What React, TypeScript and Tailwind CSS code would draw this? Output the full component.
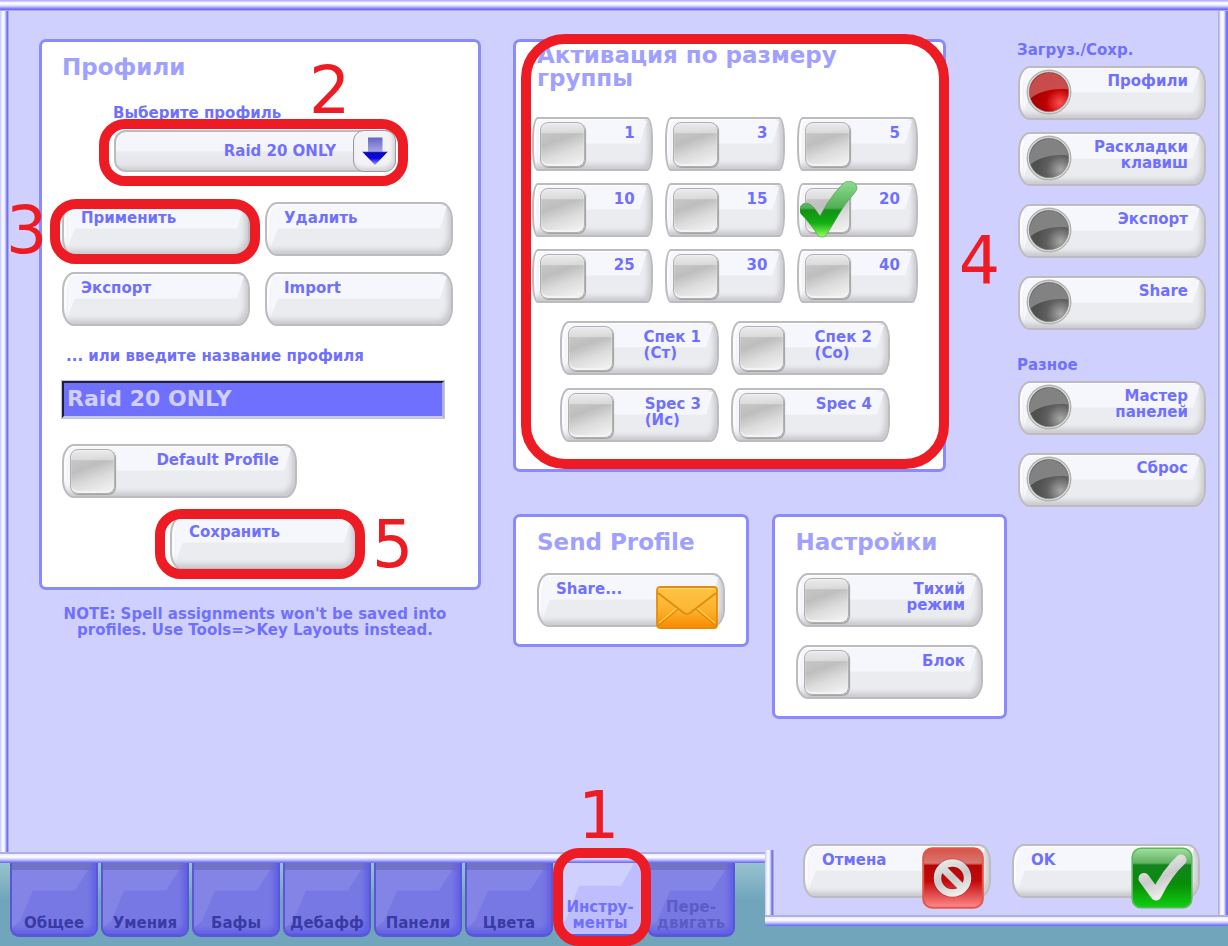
import { useState, type ReactNode } from "react";
import { clsx } from "clsx";

const FONT = "font-['DejaVu_Sans','Liberation_Sans',sans-serif]";

const SURFACE =
  "relative isolate overflow-hidden border-2 border-[#bcbcc0] bg-[#ebecf0] shadow-[inset_-3px_-4px_5px_#c9c9ce,inset_3px_2px_3px_#ffffff]";

const TEXT = "text-[15px] leading-[16px] font-bold text-[#7070ff]";

type Corner = "wide" | "medium" | "small";

function cornerClass(corner: Corner) {
  return clsx(
    corner === "wide" && "rounded-[12px/18px]",
    corner === "medium" && "rounded-[9px/18px]",
    corner === "small" && "rounded-[6px/20px]",
  );
}

function Gloss() {
  return (
    <span
      aria-hidden="true"
      className="absolute inset-x-[4px] top-[2px] bottom-[8px] -z-10 bg-[#f6f7fc] [clip-path:polygon(0_0,100%_0,calc(100%_-_7px)_56%,7px_56%,0_100%)]"
    />
  );
}

function Bar({ side }: { side: "top" | "left" | "right" | "bottom" }) {
  return (
    <div
      aria-hidden="true"
      className={clsx(
        "shrink-0",
        side === "top" &&
          "h-[11px] bg-[linear-gradient(to_bottom,#a4a4ff_0,#ffffff_3px,#f0f0ff_5px,#b4b4ff_7px,#7070ff_9px,#7070ff_10px,#aaaadd_10px)]",
        side === "left" &&
          "w-[9px] bg-[linear-gradient(to_right,#c8c8ff_0,#ffffff_3px,#e0e0ff_5px,#7070ff_7px,#7070ff_8px,#aaaadd_8px)]",
        side === "right" &&
          "w-[10px] bg-[linear-gradient(to_right,#b0b0dc_0,#b0b0dc_1px,#e0e0ff_2px,#ffffff_4px,#f0f0ff_6px,#7c7cff_8px,#7070ff_10px)]",
        side === "bottom" &&
          "h-[11px] bg-[linear-gradient(to_bottom,#b0b0dc_0,#b0b0dc_2px,#e8e8ff_2px,#ffffff_5px,#d8d8ff_7px,#9c9cff_9px,#6464f0_11px)]",
      )}
    />
  );
}

function Panel({ className, children }: { className?: string; children: ReactNode }) {
  return (
    <section className={clsx("relative rounded-[7px] border-3 border-[#8a8aff] bg-white", className)}>{children}</section>
  );
}

function Title({ className, children }: { className?: string; children: ReactNode }) {
  return <h2 className={clsx("text-[23px] leading-[23px] font-bold text-[#a0a0ff]", className)}>{children}</h2>;
}

function Highlight({ className }: { className: string }) {
  return (
    <span
      aria-hidden="true"
      className={clsx("pointer-events-none absolute z-20 border-10 border-[#ed1c24]", className)}
    />
  );
}

function Step({ className, children }: { className: string; children: ReactNode }) {
  return (
    <span
      className={clsx(
        "pointer-events-none absolute z-20 text-[65px] leading-[66px] font-normal text-[#ed1c24]",
        className,
      )}
    >
      {children}
    </span>
  );
}

function PushButton({ icon, children }: { icon?: ReactNode; children: ReactNode }) {
  return (
    <div className="relative">
      <button
        type="button"
        className={clsx(SURFACE, TEXT, cornerClass("wide"), "flex h-[54px] w-full items-start px-[17px] pt-[6px] text-left")}
      >
        <Gloss />
        {children}
      </button>
      {icon}
    </div>
  );
}

function CheckMark() {
  return (
    <svg
      aria-hidden="true"
      viewBox="0 0 58 58"
      className="pointer-events-none absolute -top-[2px] left-[3px] z-10 h-[58px] w-[58px]"
    >
      <defs>
        <linearGradient id="tick" x1="0" y1="0" x2="0" y2="1">
          <stop offset="0" stopColor="#8fdc8f" />
          <stop offset="0.48" stopColor="#4faf55" />
          <stop offset="0.52" stopColor="#149018" />
          <stop offset="0.75" stopColor="#10b010" />
          <stop offset="1" stopColor="#98ff60" />
        </linearGradient>
      </defs>
      <path
        d="M0 28c0-5 6-8 11-4 4 3 6 7 9 11C27 22 36 9 44 2c4-4 13-1 13 5 0 4-7 9-13 18-7 11-12 20-17 28-2 4-8 4-10 0C12 45 6 38 1 33c-1-1-1-3-1-5z"
        fill="url(#tick)"
        stroke="#3f9a48"
        strokeWidth="0.6"
      />
    </svg>
  );
}

function Toggle({
  label,
  corner = "wide",
  initial = false,
}: {
  label: string[];
  corner?: Corner;
  initial?: boolean;
}) {
  const [on, setOn] = useState(initial);
  return (
    <label className="relative block">
      <span
        className={clsx(
          SURFACE,
          TEXT,
          cornerClass(corner),
          "flex h-[54px] items-start justify-between pt-[3px] pr-[16px] pl-[6px]",
        )}
      >
        <Gloss />
        <input
          type="checkbox"
          checked={on}
          onChange={(e) => setOn(e.target.checked)}
          className="h-[45px] w-[45px] shrink-0 appearance-none rounded-[8px] border border-[#b0b0b0] bg-[linear-gradient(to_bottom,#f4f4f4cc_0,#ffffff66_22%,#ffffff00_25%,#ffffff00_100%),linear-gradient(160deg,#c4c4c4_25%,#bebebe_40%,#dcdcdc_65%,#f6f6f6_100%)] shadow-[inset_0_1px_1px_#f0f0f0,inset_0_-2px_1px_#f4f4f4,1px_1px_1px_#a0a0a0]"
        />
        <span className={clsx("pt-[3px]", corner === "medium" ? "text-left" : "text-right")}>
          {label.map((line) => (
            <span key={line} className="block">
              {line}
            </span>
          ))}
        </span>
      </span>
      {on && <CheckMark />}
    </label>
  );
}

function Light({ on }: { on: boolean }) {
  const fill = on ? "url(#light-on)" : "url(#light-off)";
  return (
    <svg aria-hidden="true" viewBox="0 0 46 46" className="absolute top-[1px] left-[6px] h-[46px] w-[46px]">
      <defs>
        <radialGradient id="light-on" cx="0.78" cy="0.78" r="0.6">
          <stop offset="0" stopColor="#ff5050" />
          <stop offset="0.6" stopColor="#c00000" />
          <stop offset="1" stopColor="#a80000" />
        </radialGradient>
        <radialGradient id="light-off" cx="0.8" cy="0.8" r="0.6">
          <stop offset="0" stopColor="#a8a8a8" />
          <stop offset="0.6" stopColor="#606060" />
          <stop offset="1" stopColor="#505050" />
        </radialGradient>
      </defs>
      <circle cx="23" cy="23" r="21.800" fill="#e0e2e0" stroke="#b2b4b2" strokeWidth="1.4" />
      <circle cx="23" cy="23" r="19.800" fill={fill} stroke="#7e807e" strokeOpacity="0.6" strokeWidth="1" />
      <path
        d="M4.600 29.500A19.500 19.500 0 1 1 42.400 20.500C30 19 15 21 4.600 29.500z"
        fill={on ? "#cc5454" : "#878787"}
        fillOpacity="0.9"
      />
    </svg>
  );
}

function NavItem({
  label,
  id,
  current,
  onSelect,
}: {
  label: string[];
  id: string;
  current: string;
  onSelect: (id: string) => void;
}) {
  return (
    <label
      className={clsx(
        SURFACE,
        TEXT,
        cornerClass("wide"),
        "ml-px flex h-[54px] items-start justify-end pt-[5px] pr-[16px] pl-[56px]",
      )}
    >
      <Gloss />
      <input
        type="radio"
        name="page"
        checked={current === id}
        onChange={() => onSelect(id)}
        className="absolute top-[2px] left-[6px] h-[44px] w-[44px] appearance-none rounded-full"
      />
      <Light on={current === id} />
      <span className="text-right">
        {label.map((line) => (
          <span key={line} className="block">
            {line}
          </span>
        ))}
      </span>
    </label>
  );
}

function DownArrow() {
  return (
    <svg aria-hidden="true" viewBox="0 0 26 28" className="h-[28px] w-[26px]">
      <defs>
        <linearGradient id="arrow" x1="0" y1="0" x2="0" y2="1">
          <stop offset="0" stopColor="#6464c6" />
          <stop offset="0.5" stopColor="#a4a4e2" />
          <stop offset="0.55" stopColor="#0c0cb8" />
          <stop offset="0.75" stopColor="#0808e0" />
          <stop offset="1" stopColor="#9c9cf8" />
        </linearGradient>
      </defs>
      <path d="M6 0.500h14.500v14H26L13 28 0 14.500h6z" fill="url(#arrow)" />
    </svg>
  );
}

function Envelope() {
  return (
    <svg
      aria-hidden="true"
      viewBox="0 0 62 44"
      className="pointer-events-none absolute top-[12px] right-[7px] h-[44px] w-[62px]"
    >
      <defs>
        <linearGradient id="mail" x1="0" y1="0" x2="0" y2="1">
          <stop offset="0" stopColor="#ffc648" />
          <stop offset="0.6" stopColor="#fdae28" />
          <stop offset="1" stopColor="#f98a00" />
        </linearGradient>
      </defs>
      <rect x="1" y="2" width="60" height="41" rx="3" fill="url(#mail)" stroke="#e58c0c" strokeWidth="1.800" />
      <path d="M2 41 22 24M60 41 40 24" stroke="#e08a10" strokeWidth="1.400" fill="none" />
      <path d="M3 38 21 23M59 38 41 23" stroke="#ffd04c" strokeWidth="1.200" fill="none" />
      <path d="M2 8 28 28q3 2 6 0L60 8" stroke="#dd8a14" strokeWidth="1.600" fill="#ffc040" fillOpacity="0.4" />
      <path d="M3 3.500h56" stroke="#ffd870" strokeWidth="1" />
    </svg>
  );
}

function CancelIcon() {
  return (
    <svg
      aria-hidden="true"
      viewBox="0 0 62 62"
      className="pointer-events-none absolute top-[3px] right-[7px] h-[62px] w-[62px]"
    >
      <defs>
        <linearGradient id="cancel" x1="0" y1="0" x2="0" y2="1">
          <stop offset="0" stopColor="#d85044" />
          <stop offset="0.25" stopColor="#d87870" />
          <stop offset="0.29" stopColor="#b40808" />
          <stop offset="0.55" stopColor="#c40808" />
          <stop offset="1" stopColor="#ff8c8c" />
        </linearGradient>
        <linearGradient id="silver" gradientUnits="userSpaceOnUse" x1="20" y1="10" x2="36" y2="52">
          <stop offset="0" stopColor="#f0f0f0" />
          <stop offset="0.5" stopColor="#cacaca" />
          <stop offset="1" stopColor="#f6f6f6" />
        </linearGradient>
      </defs>
      <rect x="1.200" y="1.200" width="59.600" height="59.600" rx="9" fill="url(#cancel)" stroke="#e0584c" strokeWidth="2" />
      <g fill="none" stroke="#8c0000" strokeOpacity="0.35" strokeWidth="9">
        <circle cx="30.500" cy="31" r="15" />
      </g>
      <g fill="none" stroke="url(#silver)" strokeWidth="7.500">
        <circle cx="30.500" cy="31" r="15" />
        <path d="M20 20.500 41 41.500" />
      </g>
    </svg>
  );
}

function OkIcon() {
  return (
    <svg
      aria-hidden="true"
      viewBox="0 0 62 62"
      className="pointer-events-none absolute top-[3px] right-[7px] h-[62px] w-[62px]"
    >
      <defs>
        <linearGradient id="confirm" x1="0" y1="0" x2="0" y2="1">
          <stop offset="0" stopColor="#a0e0a0" />
          <stop offset="0.25" stopColor="#62b062" />
          <stop offset="0.28" stopColor="#148420" />
          <stop offset="0.6" stopColor="#088c08" />
          <stop offset="1" stopColor="#10d010" />
        </linearGradient>
      </defs>
      <rect x="1.200" y="1.200" width="59.600" height="59.600" rx="9" fill="url(#confirm)" stroke="#5cb85c" strokeWidth="1.600" />
      <path
        d="M13 31.500 25 48C31 36 39 23 50 13"
        fill="none"
        stroke="url(#silver)"
        strokeWidth="11"
        strokeLinecap="round"
        strokeLinejoin="round"
      />
    </svg>
  );
}

const TABS: { id: string; label: string[]; faded?: boolean }[] = [
  { id: "general", label: ["Общее"] },
  { id: "skills", label: ["Умения"] },
  { id: "buffs", label: ["Бафы"] },
  { id: "debuffs", label: ["Дебафф"] },
  { id: "panels", label: ["Панели"] },
  { id: "colors", label: ["Цвета"] },
  { id: "tools", label: ["Инстру-", "менты"] },
  { id: "move", label: ["Пере-", "двигать"], faded: true },
];

function Tab({
  label,
  faded,
  active,
  onClick,
}: {
  label: string[];
  faded?: boolean;
  active: boolean;
  onClick: () => void;
}) {
  return (
    <button
      type="button"
      role="tab"
      aria-selected={active}
      onClick={onClick}
      className={clsx(
        "relative isolate flex h-[74px] w-full flex-col items-center justify-end overflow-hidden rounded-b-[9px] border-x-2 border-b-3 pb-[3px] text-[15px] leading-[16px] font-bold whitespace-nowrap",
        active
          ? "border-[#5c5cf0] bg-[#bebeff] text-[#7070ff]"
          : "border-[#5a56da] bg-[#7878e4] shadow-[inset_-4px_-4px_5px_#6260e6,inset_0_7px_0_#7272c6]",
        !active && (faded ? "text-[#5c5cc4]" : "text-[#3a3aa6]"),
      )}
    >
      <span
        aria-hidden="true"
        className={clsx(
          "absolute inset-x-0 bottom-0 -z-10 [clip-path:polygon(0_0,76px_0,63px_32%,21px_32%,8px_80%,0_90%)]",
          active ? "top-0 bg-[#d0d0ff]" : "top-[7px] bg-[#8484e7]",
        )}
      />
      {label.map((line) => (
        <span key={line} className="block">
          {line}
        </span>
      ))}
    </button>
  );
}

export default function App() {
  const [page, setPage] = useState("profiles");
  const [tab, setTab] = useState("tools");
  const [name, setName] = useState("Raid 20 ONLY");

  return (
    <div className={clsx(FONT, TEXT, "flex min-h-screen flex-col overflow-hidden bg-[#70a5bc]")}>
      <div className="flex flex-1 flex-col">
        <Bar side="top" />
        <div className="flex flex-1">
          <Bar side="left" />
          <main className="grid flex-1 grid-cols-[442fr_526fr_199fr] items-start bg-[#d0d0ff] pt-[28px] pr-[12px] pl-[30px]">
            <div>
              <Panel className="pt-[14px] pr-[25px] pb-[17px] pl-[20px]">
                <Title>Профили</Title>
                <Step className="top-[16px] left-[267px]">2</Step>
                <label htmlFor="profile" className="mt-[26px] ml-[51px] block">
                  Выберите профиль
                </label>
                <div className="relative mt-[9px] mr-[57px] ml-[52px] h-[42px]">
                  <select
                    id="profile"
                    className="h-full w-full appearance-none rounded-[12px] border-2 border-[#bcbcc0] bg-[linear-gradient(to_bottom,#f6f7fc_0,#f4f5fa_50%,#ebecf0_52%,#e6e6ea_85%,#cfcfd4_100%)] pr-[58px] [text-align-last:right]"
                  >
                    <option>Raid 20 ONLY</option>
                  </select>
                  <span className="pointer-events-none absolute inset-y-0 right-0 flex w-[43px] items-center justify-center rounded-[11px] border border-[#9a9aa2] bg-[#f3f3f7] shadow-[inset_-2px_-3px_4px_#cfcfd4]">
                    <DownArrow />
                  </span>
                  <Highlight className="-top-[11px] -right-[12px] -bottom-[14px] -left-[15px] rounded-[26px]" />
                </div>

                <div className="mt-[30px] grid grid-cols-2 gap-x-[15px] gap-y-[16px]">
                  <div className="relative">
                    <PushButton>Применить</PushButton>
                    <Highlight className="-top-[3px] -right-[10px] -bottom-[8px] -left-[12px] rounded-[26px]" />
                    <Step className="top-[-4px] left-[-56px]">3</Step>
                  </div>
                  <PushButton>Удалить</PushButton>
                  <PushButton>Экспорт</PushButton>
                  <PushButton>Import</PushButton>
                </div>

                <label htmlFor="profile-name" className="mt-[22px] ml-[4px] block">
                  ... или введите название профиля
                </label>
                <div className="mt-[17px] mr-[9px]">
                  <input
                    id="profile-name"
                    value={name}
                    onChange={(e) => setName(e.target.value)}
                    className="block h-[37px] w-full border-2 border-t-[#20203c] border-r-[#b0b0d4] border-b-[#c8c8f0] border-l-[#20203c] bg-[#7070ff] px-[3px] pb-[2px] text-[22px] leading-[23px] font-bold text-[#d0d0ff] outline-1 outline-[#c4c4cc]"
                  />
                </div>

                <div className="mt-[26px] w-[235px]">
                  <Toggle label={["Default Profile"]} />
                </div>

                <div className="relative mt-[18px] ml-[108px] w-[187px]">
                  <PushButton>Сохранить</PushButton>
                  <Highlight className="-top-[7px] -right-[8px] -bottom-[9px] -left-[15px] rounded-[26px]" />
                  <Step className="-top-[4px] left-[202px]">5</Step>
                </div>
              </Panel>
              <p className="mt-[16px] pr-[14px] pl-[4px] text-center">
                NOTE: Spell assignments won't be saved into
                <br />
                profiles. Use Tools=&gt;Key Layouts instead.
              </p>
            </div>

            <div className="pl-[32px]">
              <Panel className="mr-[61px] pt-[2px] pr-[25px] pb-[27px] pl-[16px]">
                <Title className="pl-[5px]">
                  Активация по размеру
                  <br />
                  группы
                </Title>
                <div className="mt-[27px] grid grid-cols-3 gap-[12px]">
                  {["1", "3", "5", "10", "15", "20", "25", "30", "40"].map((n) => (
                    <Toggle key={n} label={[n]} corner="small" initial={n === "20"} />
                  ))}
                </div>
                <div className="mx-[28px] mt-[18px] grid grid-cols-2 gap-x-[12px] gap-y-[13px]">
                  <Toggle label={["Спек 1", "(Ст)"]} corner="medium" />
                  <Toggle label={["Спек 2", "(Со)"]} corner="medium" />
                  <Toggle label={["Spec 3", "(Ис)"]} corner="medium" />
                  <Toggle label={["Spec 4"]} corner="medium" />
                </div>
                <Highlight className="-top-[8px] -right-[6px] bottom-0 left-[5px] rounded-[44px]" />
                <Step className="top-[186px] -right-[57px]">4</Step>
              </Panel>

              <div className="mt-[42px] grid grid-cols-2 items-start gap-[23px]">
                <Panel className="px-[21px] pt-[14px] pb-[17px]">
                  <Title>Send Profile</Title>
                  <div className="mt-[19px]">
                    <PushButton icon={<Envelope />}>Share...</PushButton>
                  </div>
                </Panel>
                <Panel className="px-[21px] pt-[14px] pb-[17px]">
                  <Title>Настройки</Title>
                  <div className="mt-[19px] flex flex-col gap-[18px]">
                    <Toggle label={["Тихий", "режим"]} />
                    <Toggle label={["Блок"]} />
                  </div>
                </Panel>
              </div>
            </div>

            <nav className="pt-[3px] pl-[10px]">
              <h3>Загруз./Сохр.</h3>
              <div className="mt-[8px] flex flex-col gap-[18px]">
                <div className="flex flex-col gap-[12px]">
                  <NavItem id="profiles" label={["Профили"]} current={page} onSelect={setPage} />
                  <NavItem id="keys" label={["Раскладки", "клавиш"]} current={page} onSelect={setPage} />
                </div>
                <NavItem id="export" label={["Экспорт"]} current={page} onSelect={setPage} />
                <NavItem id="share" label={["Share"]} current={page} onSelect={setPage} />
              </div>
              <h3 className="mt-[27px]">Разное</h3>
              <div className="mt-[8px] flex flex-col gap-[18px]">
                <NavItem id="wizard" label={["Мастер", "панелей"]} current={page} onSelect={setPage} />
                <NavItem id="reset" label={["Сброс"]} current={page} onSelect={setPage} />
              </div>
            </nav>
          </main>
          <Bar side="right" />
        </div>
        <Bar side="bottom" />
      </div>

      <footer className="flex h-[83px] items-start bg-[linear-gradient(to_bottom,#98c3cf_0,#70a5bc_45%,#70a5bc_100%)] pl-[10px]">
        <div role="tablist" className="flex gap-[3px]">
          {TABS.map((t) => (
            <div key={t.id} className="relative w-[88px]">
              <Tab label={t.label} faded={t.faded} active={tab === t.id} onClick={() => setTab(t.id)} />
              {t.id === "tools" && (
                <>
                  <Highlight className="-top-[15px] -right-[7px] -bottom-[9px] -left-[3px] rounded-[26px]" />
                  <Step className="-top-[80px] left-[22px]">1</Step>
                </>
              )}
            </div>
          ))}
        </div>
        <div className="relative z-10 -mt-[13px] ml-auto w-[463px]">
          <div className="flex h-[65px]">
            <Bar side="left" />
            <div className="grid flex-1 grid-cols-2 gap-[21px] bg-[#d0d0ff] pr-[18px] pl-[29px]">
              <div className="-mt-[6px]">
                <PushButton icon={<CancelIcon />}>Отмена</PushButton>
              </div>
              <div className="-mt-[6px]">
                <PushButton icon={<OkIcon />}>OK</PushButton>
              </div>
            </div>
            <Bar side="right" />
          </div>
          <Bar side="bottom" />
        </div>
      </footer>
    </div>
  );
}
